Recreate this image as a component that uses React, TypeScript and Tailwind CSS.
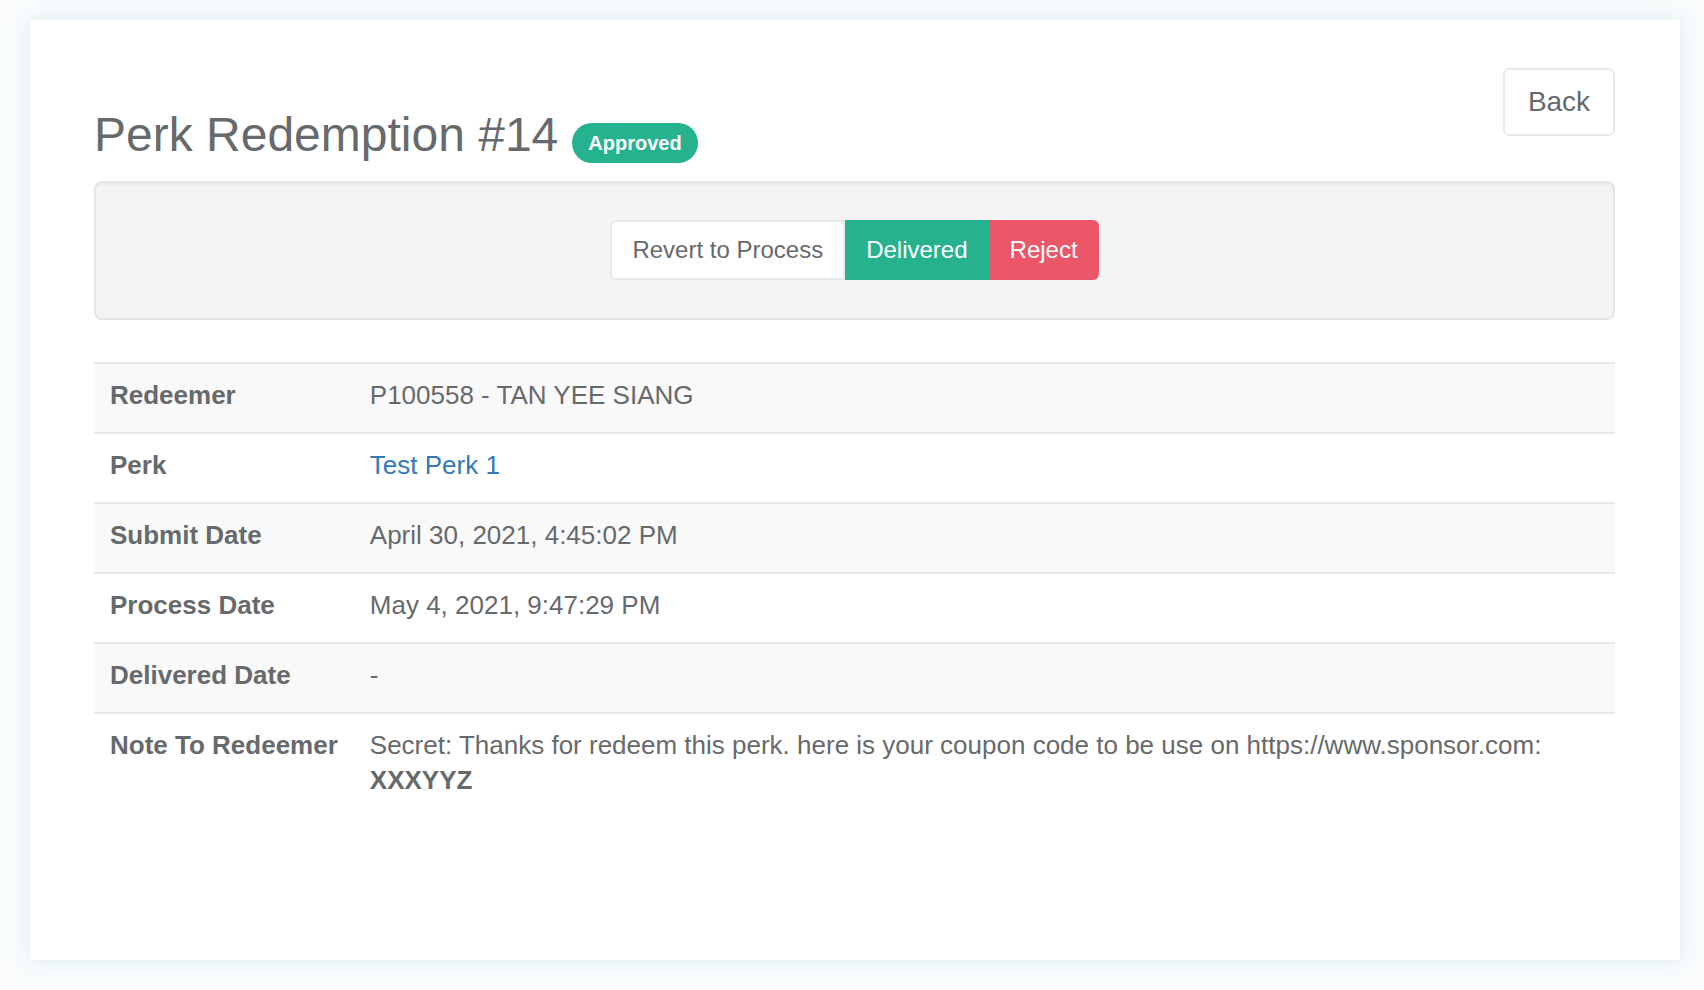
const rows: { label: string; value: React.ReactNode }[] = [
  { label: "Redeemer", value: "P100558 - TAN YEE SIANG" },
  {
    label: "Perk",
    value: (
      <a href="#" className="text-[#337ab7]">
        Test Perk 1
      </a>
    ),
  },
  { label: "Submit Date", value: "April 30, 2021, 4:45:02 PM" },
  { label: "Process Date", value: "May 4, 2021, 9:47:29 PM" },
  { label: "Delivered Date", value: "-" },
  {
    label: "Note To Redeemer",
    value: (
      <>
        Secret: Thanks for redeem this perk. here is your coupon code to be use on https://www.sponsor.com:
        <br />
        <b>XXXYYZ</b>
      </>
    ),
  },
];

export default function App() {
  return (
    <div className="min-h-screen bg-[#fafcfd] pt-[20px] pl-[30px] font-['Liberation_Sans',Arial,sans-serif] text-[#676a6c]">
      <div className="h-[940px] w-[1650px] bg-white pt-[48px] pl-[64px] pr-[65px] shadow-[0_0_22px_rgba(160,210,222,0.35)]">
        {/* Header */}
        <div className="flex items-start justify-between">
          <div className="mt-[41px] flex items-end gap-[14px]">
            <h1 className="text-[48px] leading-[1.1] font-normal">Perk Redemption #14</h1>
            <span className="mb-[-1px] flex h-[40px] items-center rounded-full bg-[#26b18f] px-[16px] text-[20px] font-bold text-white">
              Approved
            </span>
          </div>
          <button className="h-[68px] w-[112px] rounded-[6px] border-2 border-[#e7eaec] bg-white text-[28px] text-[#676a6c]">
            Back
          </button>
        </div>

        {/* Actions */}
        <div className="mt-[19px] flex h-[139px] items-center justify-center rounded-[8px] border-2 border-[#e5e5e5] bg-[#f4f4f4] shadow-[inset_0_2px_2px_rgba(0,0,0,0.04)]">
          <div className="flex h-[60px] text-[24px]">
            <button className="rounded-l-[6px] border-2 border-[#e7eaec] bg-white px-[20px] text-[#676a6c]">
              Revert to Process
            </button>
            <button className="bg-[#26b18f] px-[21px] text-white">Delivered</button>
            <button className="rounded-r-[6px] bg-[#eb5669] px-[21px] text-white">Reject</button>
          </div>
        </div>

        {/* Details */}
        <table className="mt-[42px] w-full border-collapse text-[26px] leading-[35px]">
          <tbody>
            {rows.map((r, i) => (
              <tr key={r.label} className={i % 2 === 0 ? "bg-[#f9f9f9]" : ""}>
                <td className="border-t-2 border-[#e7eaec] pt-[14px] pb-[19px] pl-[16px] pr-[16px] align-top font-bold whitespace-nowrap">
                  {r.label}
                </td>
                <td className="w-full border-t-2 border-[#e7eaec] pt-[14px] pb-[19px] pl-[16px] pr-[16px] align-top">
                  {r.value}
                </td>
              </tr>
            ))}
          </tbody>
        </table>
      </div>
    </div>
  );
}
